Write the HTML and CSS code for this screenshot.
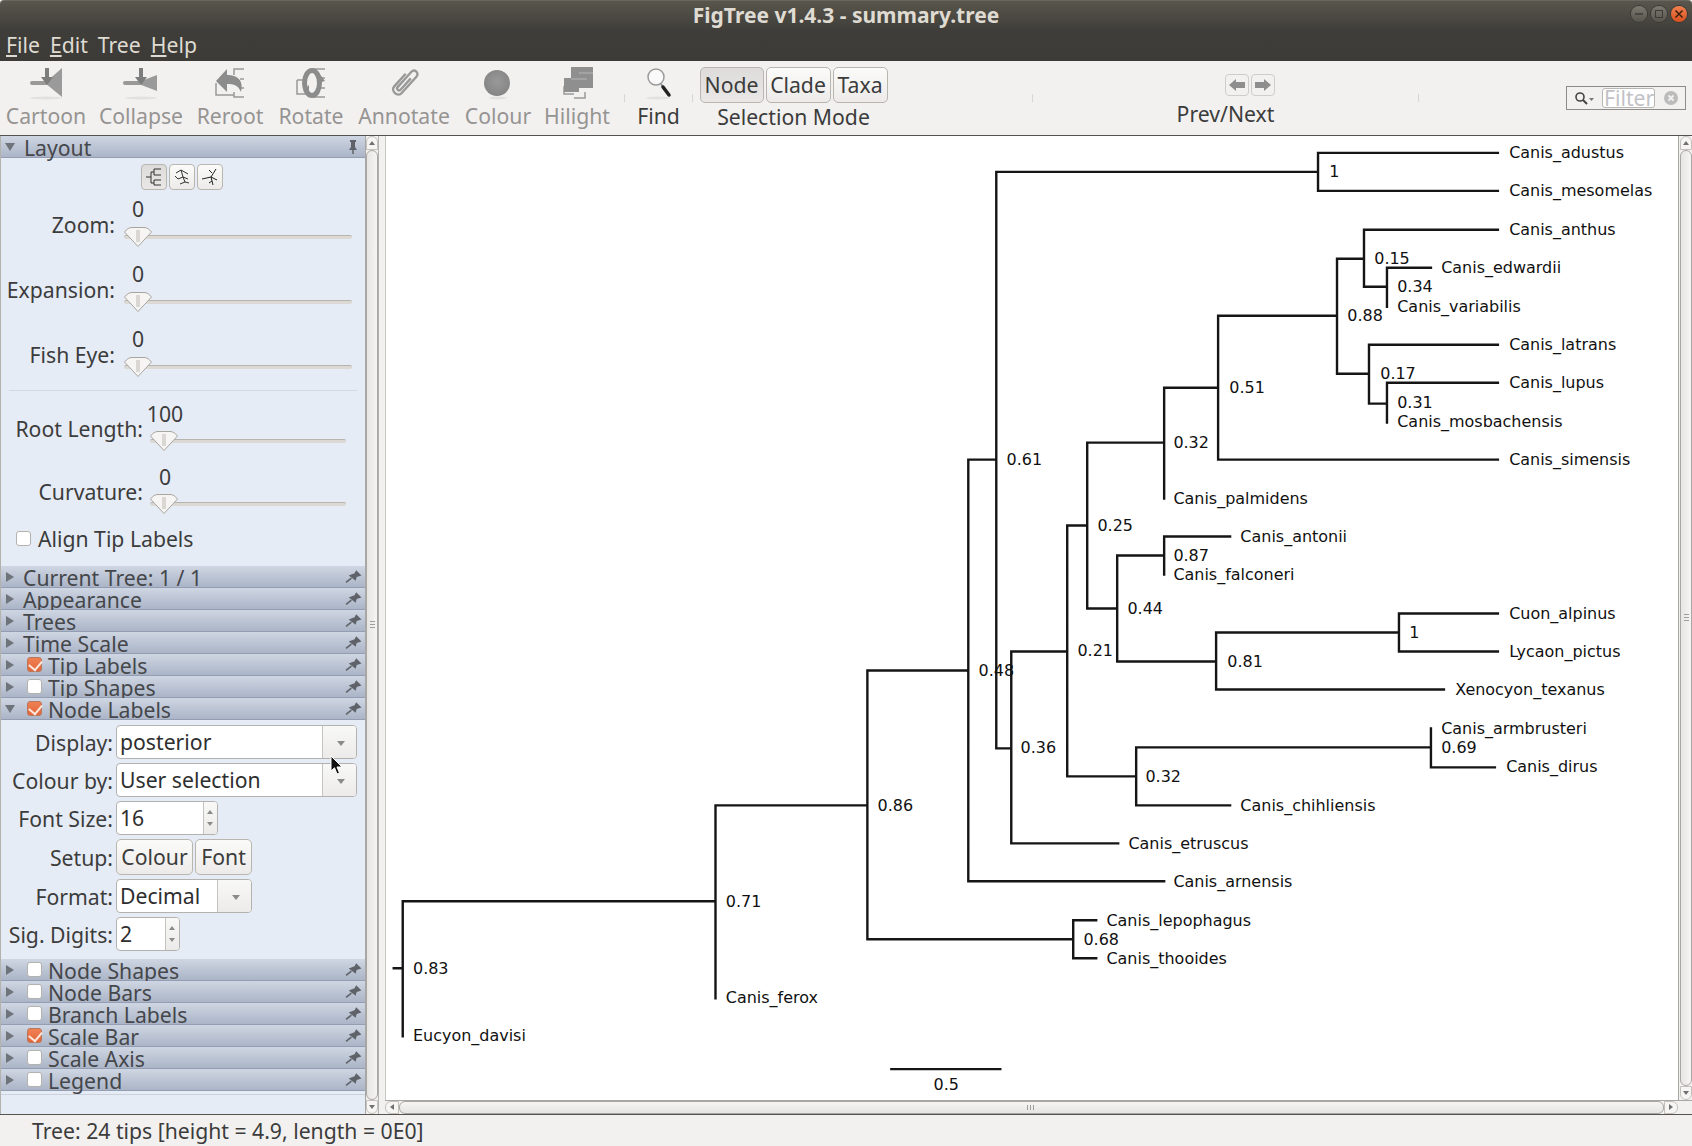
FILE: index.html
```html
<!DOCTYPE html>
<html lang="en">
<head>
  <meta charset="UTF-8">
  <title>FigTree v1.4.3 - summary.tree</title>
  <link rel="stylesheet" href="styles.css">
</head>
<body>
  <svg class="defs" width="0" height="0">
    <symbol id="pin" viewBox="0 0 16 12">
      <path d="M1 11.5 6 7.5" stroke="#5f6369" stroke-width="1.6" fill="none"/>
      <path d="M3.5 5 10 10 11 6.5 15.5 5 10.5 0 9 3Z" fill="#5f6369"/>
    </symbol>
    <symbol id="thumb" viewBox="0 0 28 20">
      <path d="M.5 5C3 2 5 .5 8 .5H20C23 .5 25 2 27.5 5L14 19.5Z" fill="#f6f5f3" stroke="#a8a59f"/>
      <path d="M13 3V15M15 3V15" stroke="#bdbab4"/>
    </symbol>
  </svg>

  <header class="titlebar">
    <div class="title">FigTree v1.4.3 - summary.tree</div>
    <div class="winbtns">
      <span class="winbtn"><svg width="10" height="10"><path d="M1 5H9" stroke="#3c3b37" stroke-width="1.5"/></svg></span>
      <span class="winbtn"><svg width="10" height="10"><rect x="1.5" y="1.5" width="7" height="7" fill="none" stroke="#3c3b37"/></svg></span>
      <span class="winbtn close"><svg width="10" height="10"><path d="M1.5 1.5 8.5 8.5M8.5 1.5 1.5 8.5" stroke="#3c2010" stroke-width="1.5"/></svg></span>
    </div>
    <nav class="menubar">
      <span><u>F</u>ile</span>
      <span><u>E</u>dit</span>
      <span>Tree</span>
      <span><u>H</u>elp</span>
    </nav>
  </header>

  <div class="toolbar">
    <div class="tool off w-cartoon">
      <svg width="40" height="38" viewBox="0 0 40 38">
        <ellipse cx="20" cy="32" rx="16" ry="1.5" fill="#e2e1df"/>
        <path d="M19 17 36 2V31Z" fill="#9a9a9a"/>
        <path d="M6 17H20" stroke="#999" stroke-width="4" stroke-linecap="round"/>
        <path d="M19 2H23V11H27L21 19 15 11H19Z" fill="#7d7d7d"/>
      </svg>
      <span>Cartoon</span>
    </div>
    <div class="tool off w-collapse">
      <svg width="40" height="38" viewBox="0 0 40 38">
        <ellipse cx="20" cy="32" rx="16" ry="1.5" fill="#e2e1df"/>
        <path d="M15 17 36 9V25Z" fill="#9a9a9a"/>
        <path d="M4 17H18" stroke="#999" stroke-width="4" stroke-linecap="round"/>
        <path d="M18 2H22V11H26L20 19 14 11H18Z" fill="#7d7d7d"/>
      </svg>
      <span>Collapse</span>
    </div>
    <div class="tool off w-reroot">
      <svg width="40" height="38" viewBox="0 0 40 38">
        <path d="M34 3H24V9M34 31H24V26M34 13H30M34 22H30M6 17V29H24" fill="none" stroke="#999" stroke-width="1.5"/>
        <path d="M6 15 17 3V9C27 9 34 14 31 26 28 19 24 18 17 18V26Z" fill="#8c8c8c"/>
      </svg>
      <span>Reroot</span>
    </div>
    <div class="tool off w-rotate">
      <svg width="40" height="38" viewBox="0 0 40 38">
        <path d="M34 3H22M34 31H22M34 12H28M34 22H28M6 14V28H18M6 14H16" fill="none" stroke="#999" stroke-width="1.5"/>
        <ellipse cx="21" cy="17" rx="7.5" ry="12.5" fill="none" stroke="#8c8c8c" stroke-width="5"/>
        <path d="M28 7 34 15 27 17ZM12 25 18 19 18 28Z" fill="#8c8c8c"/>
      </svg>
      <span>Rotate</span>
    </div>
    <div class="tool off w-annotate">
      <svg width="40" height="38" viewBox="0 0 40 38">
        <g transform="rotate(42 20 17)" fill="none" stroke="#999" stroke-width="2.4">
          <path d="M15 9V26C15 32 25 32 25 26V4C25 -1 18 -1 18 4V24C18 27 22 27 22 24V9"/>
        </g>
      </svg>
      <span>Annotate</span>
    </div>
    <div class="tool off w-colour">
      <svg width="40" height="38" viewBox="0 0 40 38">
        <defs><radialGradient id="ball" cx=".5" cy=".45" r=".55"><stop offset="0" stop-color="#999"/><stop offset="1" stop-color="#858585"/></radialGradient></defs>
        <ellipse cx="20" cy="32" rx="9" ry="1.5" fill="#e2e1df"/>
        <circle cx="19" cy="17" r="13" fill="url(#ball)"/>
      </svg>
      <span>Colour</span>
    </div>
    <div class="tool off w-hilight">
      <svg width="40" height="38" viewBox="0 0 40 38">
        <path d="M7 20V28H17M17 32H28V26" fill="none" stroke="#999" stroke-width="1.5"/>
        <path d="M14 1H36V22H22V26H7V12H14Z" fill="#8f8f8f"/>
        <path d="M22 7H36M14 13H30" stroke="#aaa" stroke-width="1.5"/>
      </svg>
      <span>Hilight</span>
    </div>
    <i class="tick"></i>
    <div class="tool w-find">
      <svg width="40" height="38" viewBox="0 0 40 38">
        <ellipse cx="19" cy="32" rx="12" ry="1.5" fill="#e2e1df"/>
        <circle cx="17" cy="11" r="8" fill="#fafafa" stroke="#9a9a9a" stroke-width="1.5"/>
        <path d="M22 18 24 21" stroke="#999" stroke-width="2"/>
        <path d="M24 21 30 29" stroke="#222" stroke-width="3.5" stroke-linecap="round"/>
      </svg>
      <span>Find</span>
    </div>
    <i class="tick"></i>
    <div class="selection">
      <div class="btn-group">
        <span class="btn active w-node">Node</span>
        <span class="btn w-clade">Clade</span>
        <span class="btn w-taxa">Taxa</span>
      </div>
      <span class="selection-label">Selection Mode</span>
    </div>
    <i class="tick tick-a"></i>
    <div class="prevnext">
      <div class="arrows">
        <span class="arrow-btn"><svg width="16" height="12"><path d="M0 6 7 0V3H16V9H7V12Z" fill="#8e8e8e"/></svg></span>
        <span class="arrow-btn"><svg width="16" height="12"><path d="M16 6 9 0V3H0V9H9V12Z" fill="#8e8e8e"/></svg></span>
      </div>
      <span>Prev/Next</span>
    </div>
    <i class="tick"></i>
    <div class="filter">
      <svg class="filter-icon" width="20" height="14"><circle cx="6" cy="6" r="4" fill="none" stroke="#444" stroke-width="1.6"/><path d="M9 9 13 13" stroke="#444" stroke-width="2"/><path d="M15 7H20L17.5 10Z" fill="#777"/></svg>
      <span class="filter-field">Filter</span>
      <svg class="filter-clear" width="14" height="14"><circle cx="7" cy="7" r="7" fill="#bcbcbc"/><path d="M4.5 4.5 9.5 9.5M9.5 4.5 4.5 9.5" stroke="#f2f1f0" stroke-width="1.8"/></svg>
    </div>
  </div>

  <main class="main">
    <aside class="panel">
      <div class="head open"><i class="tri down"></i><b>Layout</b>
        <svg class="pin-v" width="10" height="14"><path d="M2 0H8V2H7V7L9 10H1L3 7V2H2Z" fill="#5f6369"/><path d="M5 10V14" stroke="#5f6369" stroke-width="1.5"/></svg>
      </div>
      <section class="layout-body">
        <div class="icon-row">
          <span class="icon-btn active"><svg width="18" height="18" fill="none" stroke="#333"><path d="M1 9H6V4H9V1H16M9 4V7H16M6 9V15H9V12H16M9 15V17H16"/></svg></span>
          <span class="icon-btn"><svg width="18" height="18" fill="none" stroke="#333"><path d="M3 5 8 2 15 6M8 2 10 9 5 11 2 8M10 9 15 11M10 9 12 14 7 16M12 14 16 15"/></svg></span>
          <span class="icon-btn"><svg width="18" height="18" fill="none" stroke="#222"><path d="M15 1 10 9 1 11M10 9 12 17M10 9 16 12M11 5 8 2M11 13 8 15"/></svg></span>
        </div>
        <div class="slider-row">
          <label>Zoom:</label>
          <div class="slider"><div class="value">0</div><div class="track"><svg class="thumb"><use href="#thumb"/></svg></div></div>
        </div>
        <div class="slider-row">
          <label>Expansion:</label>
          <div class="slider"><div class="value">0</div><div class="track"><svg class="thumb"><use href="#thumb"/></svg></div></div>
        </div>
        <div class="slider-row">
          <label>Fish Eye:</label>
          <div class="slider"><div class="value">0</div><div class="track"><svg class="thumb"><use href="#thumb"/></svg></div></div>
        </div>
        <hr class="rule">
        <div class="slider-row wide">
          <label>Root Length:</label>
          <div class="slider"><div class="value">100</div><div class="track"><svg class="thumb"><use href="#thumb"/></svg></div></div>
        </div>
        <div class="slider-row wide">
          <label>Curvature:</label>
          <div class="slider"><div class="value">0</div><div class="track"><svg class="thumb"><use href="#thumb"/></svg></div></div>
        </div>
        <div class="align-row"><i class="check"></i><span>Align Tip Labels</span></div>
      </section>

      <div class="head"><i class="tri"></i><b>Current Tree: 1 / 1</b><svg class="pin"><use href="#pin"/></svg></div>
      <div class="head"><i class="tri"></i><b>Appearance</b><svg class="pin"><use href="#pin"/></svg></div>
      <div class="head"><i class="tri"></i><b>Trees</b><svg class="pin"><use href="#pin"/></svg></div>
      <div class="head"><i class="tri"></i><b>Time Scale</b><svg class="pin"><use href="#pin"/></svg></div>
      <div class="head"><i class="tri"></i><i class="check on"></i><b>Tip Labels</b><svg class="pin"><use href="#pin"/></svg></div>
      <div class="head"><i class="tri"></i><i class="check"></i><b>Tip Shapes</b><svg class="pin"><use href="#pin"/></svg></div>
      <div class="head open"><i class="tri down"></i><i class="check on"></i><b>Node Labels</b><svg class="pin"><use href="#pin"/></svg></div>

      <section class="labels-body">
        <label>Display:</label>
        <div class="combo w-full"><span class="combo-text">posterior</span><span class="combo-arrow"></span></div>
        <label>Colour by:</label>
        <div class="combo w-full"><span class="combo-text">User selection</span><span class="combo-arrow"></span></div>
        <label>Font Size:</label>
        <div class="combo w-font"><span class="combo-text">16</span><span class="spin"></span></div>
        <label>Setup:</label>
        <div class="setup"><span class="btn w-colourbtn">Colour</span><span class="btn w-fontbtn">Font</span></div>
        <label>Format:</label>
        <div class="combo w-format"><span class="combo-text">Decimal</span><span class="combo-arrow"></span></div>
        <label>Sig. Digits:</label>
        <div class="combo w-digits"><span class="combo-text">2</span><span class="spin"></span></div>
      </section>

      <div class="head"><i class="tri"></i><i class="check"></i><b>Node Shapes</b><svg class="pin"><use href="#pin"/></svg></div>
      <div class="head"><i class="tri"></i><i class="check"></i><b>Node Bars</b><svg class="pin"><use href="#pin"/></svg></div>
      <div class="head"><i class="tri"></i><i class="check"></i><b>Branch Labels</b><svg class="pin"><use href="#pin"/></svg></div>
      <div class="head"><i class="tri"></i><i class="check on"></i><b>Scale Bar</b><svg class="pin"><use href="#pin"/></svg></div>
      <div class="head"><i class="tri"></i><i class="check"></i><b>Scale Axis</b><svg class="pin"><use href="#pin"/></svg></div>
      <div class="head"><i class="tri"></i><i class="check"></i><b>Legend</b><svg class="pin"><use href="#pin"/></svg></div>
      <div class="panel-end"></div>
    </aside>

    <div class="vscroll">
      <span class="cap up"></span>
      <span class="bar"><i class="grip"></i></span>
      <span class="cap dn"></span>
    </div>
    <div class="split"></div>

    <div class="view">
      <div class="view-top">
        <!-- tree coordinates are page pixels, viewBox starts at the canvas corner -->
        <svg class="tree" width="1293" height="964" viewBox="385 136 1293 964">
          <path class="branches" d="M393 968H402M402 901V1036M402 901H715M715 805V998M715 805H867M867 670V939M867 670H968M968 459V881M968 881H1164M968 459H996M996 171V748M996 171H1318M1318 152V190M1318 152H1498M1318 190H1498
            M996 748H1011M1011 651V843M1011 843H1118M1011 651H1067M1067 525V776M1067 525H1087M1087 442V608M1087 442H1164M1164 387V498M1164 387H1218M1218 315V459M1218 459H1498M1218 315H1337M1337 258V373M1337 258H1364M1364 229V286M1364 229H1498M1364 286H1387M1387 267V306M1387 267H1431M1337 373H1369M1369 344V403M1369 344H1498M1369 403H1387M1387 382V422M1387 382H1498
            M1087 608H1117M1117 555V661M1117 555H1164M1164 536V574M1164 536H1230M1117 661H1216M1216 632V689M1216 632H1399M1399 613V651M1399 613H1498M1399 651H1498M1216 689H1444
            M1067 776H1136M1136 747V805M1136 747H1431M1431 728V767M1431 767H1495M1136 805H1230
            M867 939H1073M1073 920V958M1073 920H1096M1073 958H1096M891 1069H1000"/>
          <g class="labels">
            <text x="1509" y="158">Canis_adustus</text>
            <text x="1509" y="196">Canis_mesomelas</text>
            <text x="1509" y="235">Canis_anthus</text>
            <text x="1441" y="273">Canis_edwardii</text>
            <text x="1397" y="312">Canis_variabilis</text>
            <text x="1509" y="350">Canis_latrans</text>
            <text x="1509" y="388">Canis_lupus</text>
            <text x="1397" y="427">Canis_mosbachensis</text>
            <text x="1509" y="465">Canis_simensis</text>
            <text x="1173" y="504">Canis_palmidens</text>
            <text x="1240" y="542">Canis_antonii</text>
            <text x="1173" y="580">Canis_falconeri</text>
            <text x="1509" y="619">Cuon_alpinus</text>
            <text x="1509" y="657">Lycaon_pictus</text>
            <text x="1455" y="695">Xenocyon_texanus</text>
            <text x="1441" y="734">Canis_armbrusteri</text>
            <text x="1506" y="772">Canis_dirus</text>
            <text x="1240" y="811">Canis_chihliensis</text>
            <text x="1128" y="849">Canis_etruscus</text>
            <text x="1173" y="887">Canis_arnensis</text>
            <text x="1106" y="926">Canis_lepophagus</text>
            <text x="1106" y="964">Canis_thooides</text>
            <text x="725" y="1003">Canis_ferox</text>
            <text x="412" y="1041">Eucyon_davisi</text>

            <text x="1329" y="177">1</text>
            <text x="1374" y="264">0.15</text>
            <text x="1397" y="292">0.34</text>
            <text x="1347" y="321">0.88</text>
            <text x="1380" y="379">0.17</text>
            <text x="1397" y="408">0.31</text>
            <text x="1229" y="393">0.51</text>
            <text x="1173" y="448">0.32</text>
            <text x="1006" y="465">0.61</text>
            <text x="1097" y="531">0.25</text>
            <text x="1173" y="561">0.87</text>
            <text x="1127" y="614">0.44</text>
            <text x="1409" y="638">1</text>
            <text x="1077" y="656">0.21</text>
            <text x="1227" y="667">0.81</text>
            <text x="978" y="676">0.48</text>
            <text x="1020" y="753">0.36</text>
            <text x="1441" y="753">0.69</text>
            <text x="1145" y="782">0.32</text>
            <text x="877" y="811">0.86</text>
            <text x="725" y="907">0.71</text>
            <text x="1083" y="945">0.68</text>
            <text x="412" y="974">0.83</text>
            <text x="933" y="1090">0.5</text>
          </g>
        </svg>
        <div class="vscroll right">
          <span class="cap up"></span>
          <span class="bar"><i class="grip"></i></span>
          <span class="cap dn"></span>
        </div>
      </div>
      <div class="hscroll">
        <span class="cap lf"></span>
        <span class="hbar"><i class="hgrip"></i></span>
        <span class="cap rt"></span>
        <span class="corner"></span>
      </div>
    </div>
  </main>

  <footer class="status">Tree: 24 tips [height = 4.9, length = 0E0]</footer>

  <svg class="cursor" width="14" height="21" viewBox="0 0 14 21"><path d="M1 1V16L4.5 12.8 7 19 9.5 18 7 12H12Z" fill="#111" stroke="#fff"/></svg>
</body>
</html>
```

FILE: styles.css
```css
* {
  margin: 0;
  padding: 0;
  box-sizing: border-box;
}

html, body {
  width: 1692px;
  height: 1146px;
  overflow: hidden;
}

body {
  background: #f2f1f0;
  display: flex;
  flex-direction: column;
  font-family: 'Noto Sans', sans-serif;
  font-size: 21.2px;
  color: #3c3c3c;
  position: relative;
}

i { font-style: normal; }
.defs { position: absolute; }

/* window header */
.titlebar {
  height: 61px;
  flex: none;
  background: linear-gradient(#5a564e 0, #524f47 8px, #3e3d39 30px, #3c3b37 100%);
  border-top: 1px solid #6a675f;
  border-radius: 4px 4px 0 0;
  position: relative;
  color: #dfdbd2;
}

.title {
  height: 29px;
  line-height: 29px;
  text-align: center;
  font-weight: 700;
  font-size: 21px;
}

.winbtns {
  position: absolute;
  top: 5px;
  right: 5px;
  display: flex;
  gap: 4px;
}

.winbtn {
  width: 16px;
  height: 16px;
  border-radius: 50%;
  background: linear-gradient(#7c7970, #56544d);
  display: flex;
  align-items: center;
  justify-content: center;
  box-shadow: 0 0 0 1px #3c3b37;
}

.winbtn.close { background: linear-gradient(#f08050, #d9501e); }

.menubar {
  display: flex;
  height: 29px;
  align-items: center;
  padding-left: 6px;
  gap: 10px;
}

/* toolbar */
.toolbar {
  height: 75px;
  flex: none;
  display: flex;
  border-bottom: 1px solid #55534e;
  background: #f2f1f0;
}

.tool {
  display: flex;
  flex-direction: column;
  align-items: center;
  padding-top: 5px;
  flex: none;
  white-space: nowrap;
}

.tool span { line-height: 24px; }
.tool svg { display: block; flex: none; }
.off { color: #969492; }

.w-cartoon { width: 92px; }
.w-collapse { width: 98px; }
.w-reroot { width: 80px; }
.w-rotate { width: 82px; }
.w-annotate { width: 104px; }
.w-colour { width: 84px; }
.w-hilight { width: 74px; margin-right: 10px; }
.w-find { width: 67px; }

.tick {
  flex: none;
  width: 1px;
  height: 8px;
  background: #d8d6d3;
  align-self: flex-end;
  margin-bottom: 33px;
}

.selection {
  width: 189px;
  margin-left: 6px;
  margin-right: 144px;
  flex: none;
  display: flex;
  flex-direction: column;
  align-items: center;
  padding-top: 6px;
}

.btn-group { display: flex; gap: 2px; }

.btn {
  height: 36px;
  display: flex;
  align-items: center;
  justify-content: center;
  border: 1px solid #b9b6b0;
  border-radius: 5px;
  background: linear-gradient(#fbfbfa, #ecebe9);
  color: #3c3c3c;
  line-height: 32px;
  padding-bottom: 1px;
}

.btn.active { background: linear-gradient(#dddcda, #e9e8e6); }
.w-node { width: 64px; }
.w-clade { width: 65px; }
.w-taxa { width: 55px; }

.selection-label { line-height: 26px; margin-top: 1px; }

.prevnext {
  width: 385px;
  flex: none;
  display: flex;
  flex-direction: column;
  align-items: center;
  padding-top: 13px;
  line-height: 26px;
}

.arrows { display: flex; gap: 2px; margin: 0 0 5px 48px; }

.arrow-btn {
  width: 24px;
  height: 22px;
  border: 1px solid #cfcdc9;
  border-radius: 4px;
  display: flex;
  align-items: center;
  justify-content: center;
}

.filter {
  width: 120px;
  height: 24px;
  margin: 25px 0 0 147px;
  flex: none;
  border: 1px solid #8d8c8a;
  display: flex;
  align-items: center;
  padding-left: 7px;
}

.filter-field {
  width: 53px;
  height: 20px;
  margin-left: 8px;
  border: 1px solid #b8b6b2;
  border-radius: 3px;
  background: #fff;
  color: #c2c2c6;
  line-height: 17px;
  padding-left: 1px;
}

.filter-clear { margin-left: 9px; }

/* main area */
.main {
  height: 978px;
  flex: none;
  display: flex;
}

.panel {
  width: 366px;
  flex: none;
  background: #e6ecf6;
  border-left: 1px solid #b4b2ae;
  border-right: 1px solid #a9a7a3;
  display: flex;
  flex-direction: column;
}

.head {
  height: 22px;
  flex: none;
  display: flex;
  align-items: center;
  background: linear-gradient(#cfd6e3, #abb5c7);
  border-bottom: 1px solid #939eb3;
  line-height: 21px;
  position: relative;
  white-space: nowrap;
}

.head b {
  font-weight: 400;
  color: #45474b;
  margin-left: 9px;
  padding-top: 1px;
}

.head .check + b { margin-left: 6px; }
.head .check { margin-left: 13px; }
.head .down + .check { margin-left: 12px; }

.tri {
  width: 0;
  height: 0;
  margin-left: 5px;
  border-left: 8px solid #6f737a;
  border-top: 5px solid transparent;
  border-bottom: 5px solid transparent;
}

.tri.down {
  margin-left: 4px;
  border-left: 5px solid transparent;
  border-right: 5px solid transparent;
  border-top: 8px solid #6f737a;
  border-bottom: 0;
  width: 10px;
}

.pin {
  width: 17px;
  height: 13px;
  margin-left: auto;
  margin-right: 3px;
}

.pin-v { margin-left: auto; margin-right: 7px; }

.check {
  width: 15px;
  height: 15px;
  flex: none;
  display: inline-block;
  border: 1px solid #b4b2ae;
  border-radius: 3px;
  background: #fff;
  position: relative;
}

.check.on {
  background: linear-gradient(#ef8053, #e3673a);
  border-color: #b9785c;
}

.check.on::after {
  content: "";
  position: absolute;
  left: 3px;
  top: 0;
  width: 7px;
  height: 10px;
  border-right: 2px solid #fbe8de;
  border-bottom: 2px solid #fbe8de;
  transform: rotate(40deg);
}

.layout-body {
  height: 408px;
  flex: none;
  padding-top: 6px;
}

.icon-row {
  display: flex;
  gap: 2px;
  padding-left: 140px;
  height: 26px;
  margin-bottom: 6px;
}

.icon-btn {
  width: 26px;
  height: 26px;
  border: 1px solid #b9b6b0;
  border-radius: 4px;
  background: linear-gradient(#fbfbfa, #ecebe9);
  display: flex;
  align-items: center;
  justify-content: center;
}

.icon-btn.active { background: linear-gradient(#dddcda, #e9e8e6); }

.slider-row {
  display: grid;
  grid-template-columns: 114px 228px;
  column-gap: 9px;
  height: 56px;
  margin-bottom: 9px;
  align-items: center;
}

.slider-row label { text-align: right; white-space: nowrap; }

.slider { align-self: start; }

.value {
  width: 28px;
  height: 26px;
  line-height: 26px;
  display: flex;
  justify-content: center;
  white-space: nowrap;
  margin-bottom: 13px;
}

.track {
  height: 4px;
  margin-bottom: 13px;
  background: #dcd9d5;
  border-top: 1px solid #b7b3ad;
  border-radius: 2px;
  position: relative;
}

.thumb {
  position: absolute;
  left: 0;
  top: -9px;
  width: 28px;
  height: 20px;
}

.rule {
  border: 0;
  height: 1px;
  background: #d3d8e2;
  margin: -1px 8px 10px 8px;
}

.slider-row.wide {
  grid-template-columns: 142px 196px;
  column-gap: 7px;
  margin-bottom: 7px;
}

.slider-row.wide label { padding-bottom: 2px; }
.slider-row.wide .value { width: 30px; height: 25px; line-height: 25px; }

.align-row {
  display: flex;
  align-items: center;
  gap: 7px;
  padding-left: 15px;
  height: 22px;
  margin-top: 7px;
}

.labels-body {
  height: 239px;
  flex: none;
  padding-top: 5px;
  display: grid;
  grid-template-columns: 112px 1fr;
  grid-auto-rows: min-content;
  column-gap: 3px;
  row-gap: 4px;
  align-items: center;
}

.labels-body label { text-align: right; white-space: nowrap; }

.combo {
  height: 34px;
  display: flex;
  border: 1px solid #b4b2ae;
  border-radius: 4px;
  background: #fff;
  overflow: hidden;
  color: #2e2e2e;
}

.w-full { width: 241px; }
.w-font { width: 102px; }
.w-format { width: 136px; }
.w-digits { width: 64px; }

.combo-text {
  flex: 1;
  padding-left: 3px;
  line-height: 32px;
  white-space: nowrap;
}

.combo-arrow {
  flex: none;
  width: 34px;
  border-left: 1px solid #c6c4c0;
  background: linear-gradient(#f8f8f7, #ecebe9);
  position: relative;
}

.combo-arrow::after {
  content: "";
  position: absolute;
  left: 14px;
  top: 15px;
  border-top: 5px solid #8a8a8a;
  border-left: 4px solid transparent;
  border-right: 4px solid transparent;
}

.spin {
  flex: none;
  width: 14px;
  border-left: 1px solid #c6c4c0;
  background: linear-gradient(#f8f8f7, #ecebe9);
  position: relative;
}

.spin::before, .spin::after {
  content: "";
  position: absolute;
  left: 3px;
  border-left: 3px solid transparent;
  border-right: 3px solid transparent;
}

.spin::before { top: 8px; border-bottom: 4px solid #8a8a8a; }
.spin::after { bottom: 8px; border-top: 4px solid #8a8a8a; }

.setup { display: flex; gap: 2px; }
.w-colourbtn { width: 77px; }
.w-fontbtn { width: 57px; }

.panel-end {
  flex: 1;
  margin-top: 3px;
  border-top: 1px solid #cbd2de;
}

/* scrollbars */
.vscroll {
  width: 12px;
  flex: none;
  background: #f2f1f0;
  display: flex;
  flex-direction: column;
}

.vscroll.right { width: 14px; border-left: 1px solid #a9a7a3; padding-left: 1px; }

.cap {
  flex: none;
  height: 14px;
  border: 1px solid #c4c1bc;
  background: #f6f5f4;
  position: relative;
}

.up { border-radius: 6px 6px 0 0; }
.dn { border-radius: 0 0 6px 6px; }

.up::after, .dn::after {
  content: "";
  position: absolute;
  left: 2px;
  border-left: 3px solid transparent;
  border-right: 3px solid transparent;
}

.up::after { top: 4px; border-bottom: 4px solid #707070; }
.dn::after { bottom: 4px; border-top: 4px solid #707070; }

.bar {
  flex: 1;
  border: 1px solid #a9a7a3;
  border-radius: 6px;
  background: linear-gradient(90deg, #e6e5e3, #f6f5f4);
  display: flex;
  align-items: center;
  justify-content: center;
}

.grip {
  width: 5px;
  height: 9px;
  background: repeating-linear-gradient(#a09e9a 0 1px, transparent 1px 3px);
}

.split {
  width: 7px;
  flex: none;
  border-left: 1px solid #b4b2ae;
  background: #f2f1f0;
}

.view {
  flex: 1;
  display: flex;
  flex-direction: column;
  min-width: 0;
}

.view-top { flex: 1; display: flex; min-height: 0; }

.tree {
  display: block;
  flex: none;
  background: #fff;
  border-left: 1px solid #c9c7c3;
}

.branches {
  fill: none;
  stroke: #151515;
  stroke-width: 2.4;
  stroke-linecap: square;
  transform: translate(-.25px, .5px);
}

.labels text {
  font-family: 'DejaVu Sans', sans-serif;
  font-size: 16px;
  fill: #111;
}

.hscroll {
  height: 14px;
  flex: none;
  display: flex;
  background: #f2f1f0;
  border-top: 1px solid #a9a7a3;
}

.hscroll .cap { width: 14px; height: 13px; }

.lf { border-radius: 6px 0 0 6px; }
.rt { border-radius: 0 6px 6px 0; }

.lf::after, .rt::after {
  content: "";
  position: absolute;
  top: 2px;
  border-top: 3px solid transparent;
  border-bottom: 3px solid transparent;
}

.lf::after { left: 4px; border-right: 4px solid #707070; }
.rt::after { right: 4px; border-left: 4px solid #707070; }

.hbar {
  flex: 1;
  border: 1px solid #a9a7a3;
  border-radius: 6px;
  background: linear-gradient(#f6f5f4, #e6e5e3);
  display: flex;
  align-items: center;
  justify-content: center;
}

.hgrip {
  width: 9px;
  height: 5px;
  background: repeating-linear-gradient(90deg, #a09e9a 0 1px, transparent 1px 3px);
}

.corner { width: 14px; flex: none; }

.status {
  flex: 1;
  border-top: 1px solid #55534e;
  padding-left: 32px;
  line-height: 32px;
  background: #f2f1f0;
  color: #3c3c3c;
}

.cursor {
  position: absolute;
  left: 330px;
  top: 755px;
}
```
